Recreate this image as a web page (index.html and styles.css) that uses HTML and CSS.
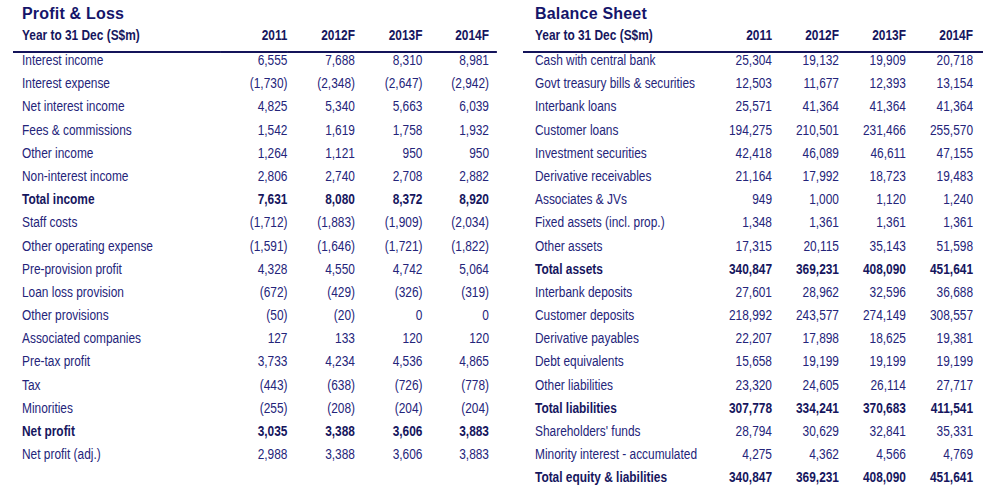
FILE: index.html
```html
<!DOCTYPE html>
<html lang="en">
<head>
<meta charset="utf-8">
<title>Profit &amp; Loss / Balance Sheet</title>
<link rel="stylesheet" href="styles.css">
</head>
<body>
<div class="page">
  <section class="panel panel-pl">
    <div class="title">Profit &amp; Loss</div>
    <table class="fin">
      <colgroup><col class="c-label"><col class="c-num"><col class="c-num"><col class="c-num"><col class="c-last"></colgroup>
      <thead>
        <tr><th class="lbl">Year to 31 Dec (S$m)</th><th>2011</th><th>2012F</th><th>2013F</th><th>2014F</th></tr>
      </thead>
      <tbody>
        <tr><td class="lbl">Interest income</td><td>6,555</td><td>7,688</td><td>8,310</td><td>8,981</td></tr>
        <tr><td class="lbl">Interest expense</td><td>(1,730)</td><td>(2,348)</td><td>(2,647)</td><td>(2,942)</td></tr>
        <tr><td class="lbl">Net interest income</td><td>4,825</td><td>5,340</td><td>5,663</td><td>6,039</td></tr>
        <tr><td class="lbl">Fees &amp; commissions</td><td>1,542</td><td>1,619</td><td>1,758</td><td>1,932</td></tr>
        <tr><td class="lbl">Other income</td><td>1,264</td><td>1,121</td><td>950</td><td>950</td></tr>
        <tr><td class="lbl">Non-interest income</td><td>2,806</td><td>2,740</td><td>2,708</td><td>2,882</td></tr>
        <tr class="tot"><td class="lbl">Total income</td><td>7,631</td><td>8,080</td><td>8,372</td><td>8,920</td></tr>
        <tr><td class="lbl">Staff costs</td><td>(1,712)</td><td>(1,883)</td><td>(1,909)</td><td>(2,034)</td></tr>
        <tr><td class="lbl">Other operating expense</td><td>(1,591)</td><td>(1,646)</td><td>(1,721)</td><td>(1,822)</td></tr>
        <tr><td class="lbl">Pre-provision profit</td><td>4,328</td><td>4,550</td><td>4,742</td><td>5,064</td></tr>
        <tr><td class="lbl">Loan loss provision</td><td>(672)</td><td>(429)</td><td>(326)</td><td>(319)</td></tr>
        <tr><td class="lbl">Other provisions</td><td>(50)</td><td>(20)</td><td>0</td><td>0</td></tr>
        <tr><td class="lbl">Associated companies</td><td>127</td><td>133</td><td>120</td><td>120</td></tr>
        <tr><td class="lbl">Pre-tax profit</td><td>3,733</td><td>4,234</td><td>4,536</td><td>4,865</td></tr>
        <tr><td class="lbl">Tax</td><td>(443)</td><td>(638)</td><td>(726)</td><td>(778)</td></tr>
        <tr><td class="lbl">Minorities</td><td>(255)</td><td>(208)</td><td>(204)</td><td>(204)</td></tr>
        <tr class="tot"><td class="lbl">Net profit</td><td>3,035</td><td>3,388</td><td>3,606</td><td>3,883</td></tr>
        <tr><td class="lbl">Net profit (adj.)</td><td>2,988</td><td>3,388</td><td>3,606</td><td>3,883</td></tr>
      </tbody>
    </table>
  </section>
  <section class="panel panel-bs">
    <div class="title">Balance Sheet</div>
    <table class="fin">
      <colgroup><col class="c-label"><col class="c-num"><col class="c-num"><col class="c-num"><col class="c-last"></colgroup>
      <thead>
        <tr><th class="lbl">Year to 31 Dec (S$m)</th><th>2011</th><th>2012F</th><th>2013F</th><th>2014F</th></tr>
      </thead>
      <tbody>
        <tr><td class="lbl">Cash with central bank</td><td>25,304</td><td>19,132</td><td>19,909</td><td>20,718</td></tr>
        <tr><td class="lbl">Govt treasury bills &amp; securities</td><td>12,503</td><td>11,677</td><td>12,393</td><td>13,154</td></tr>
        <tr><td class="lbl">Interbank loans</td><td>25,571</td><td>41,364</td><td>41,364</td><td>41,364</td></tr>
        <tr><td class="lbl">Customer loans</td><td>194,275</td><td>210,501</td><td>231,466</td><td>255,570</td></tr>
        <tr><td class="lbl">Investment securities</td><td>42,418</td><td>46,089</td><td>46,611</td><td>47,155</td></tr>
        <tr><td class="lbl">Derivative receivables</td><td>21,164</td><td>17,992</td><td>18,723</td><td>19,483</td></tr>
        <tr><td class="lbl">Associates &amp; JVs</td><td>949</td><td>1,000</td><td>1,120</td><td>1,240</td></tr>
        <tr><td class="lbl">Fixed assets (incl. prop.)</td><td>1,348</td><td>1,361</td><td>1,361</td><td>1,361</td></tr>
        <tr><td class="lbl">Other assets</td><td>17,315</td><td>20,115</td><td>35,143</td><td>51,598</td></tr>
        <tr class="tot"><td class="lbl">Total assets</td><td>340,847</td><td>369,231</td><td>408,090</td><td>451,641</td></tr>
        <tr><td class="lbl">Interbank deposits</td><td>27,601</td><td>28,962</td><td>32,596</td><td>36,688</td></tr>
        <tr><td class="lbl">Customer deposits</td><td>218,992</td><td>243,577</td><td>274,149</td><td>308,557</td></tr>
        <tr><td class="lbl">Derivative payables</td><td>22,207</td><td>17,898</td><td>18,625</td><td>19,381</td></tr>
        <tr><td class="lbl">Debt equivalents</td><td>15,658</td><td>19,199</td><td>19,199</td><td>19,199</td></tr>
        <tr><td class="lbl">Other liabilities</td><td>23,320</td><td>24,605</td><td>26,114</td><td>27,717</td></tr>
        <tr class="tot"><td class="lbl">Total liabilities</td><td>307,778</td><td>334,241</td><td>370,683</td><td>411,541</td></tr>
        <tr><td class="lbl">Shareholders' funds</td><td>28,794</td><td>30,629</td><td>32,841</td><td>35,331</td></tr>
        <tr><td class="lbl">Minority interest - accumulated</td><td>4,275</td><td>4,362</td><td>4,566</td><td>4,769</td></tr>
        <tr class="tot"><td class="lbl">Total equity &amp; liabilities</td><td>340,847</td><td>369,231</td><td>408,090</td><td>451,641</td></tr>
      </tbody>
    </table>
  </section>
</div>
</body>
</html>
```
FILE: styles.css
```css
html, body {
  margin: 0;
  padding: 0;
  background: #ffffff;
}

/* Arial-Narrow look: regular Liberation Sans condensed horizontally */
.page {
  --k: 0.85;
  display: flex;
  gap: 26px;
  padding: 5px 0 0 13px;
  font-family: "Liberation Sans", Arial, sans-serif;
  color: #24247a;
}

.panel { flex: none; }
.panel-pl { width: 484px; }
.panel-bs { width: 460px; }

.title {
  font-weight: bold;
  font-size: 16px;
  line-height: 18px;
  letter-spacing: 0.2px;
  color: #15156a;
}
.panel-pl .title { padding-left: 9px; }
.panel-bs .title { padding-left: 12px; }

.fin {
  border-collapse: collapse;
  table-layout: fixed;
  font-size: 14px;
  line-height: 14px;
  transform: scaleX(var(--k));
  transform-origin: 0 0;
}
.panel-pl .fin { width: calc(484px / var(--k)); }
.panel-bs .fin { width: calc(460px / var(--k)); }

.panel-pl .c-label { width: calc(207px / var(--k)); }
.panel-pl .c-num { width: calc(67.5px / var(--k)); }
.panel-pl .c-last { width: calc(74.5px / var(--k)); }
.panel-bs .c-label { width: calc(182px / var(--k)); }
.panel-bs .c-num { width: calc(67px / var(--k)); }
.panel-bs .c-last { width: calc(77px / var(--k)); }

.fin th, .fin td {
  padding: 0;
  text-align: right;
  white-space: nowrap;
  vertical-align: top;
}

.fin th {
  font-weight: bold;
  color: #16165e;
  padding: 5px 0 9px;
  border-bottom: 2px solid #14145a;
}

.fin td { height: 23.2px; }

.panel-pl .fin th:last-child, .panel-pl .fin td:last-child { padding-right: calc(8px / var(--k)); }
.panel-bs .fin th:last-child, .panel-bs .fin td:last-child { padding-right: calc(10px / var(--k)); }

.panel-pl .fin .lbl { padding-left: calc(9px / var(--k)); text-align: left; }
.panel-bs .fin .lbl { padding-left: calc(12px / var(--k)); text-align: left; }

.fin tr.tot td {
  font-weight: bold;
  color: #16165e;
}
```
